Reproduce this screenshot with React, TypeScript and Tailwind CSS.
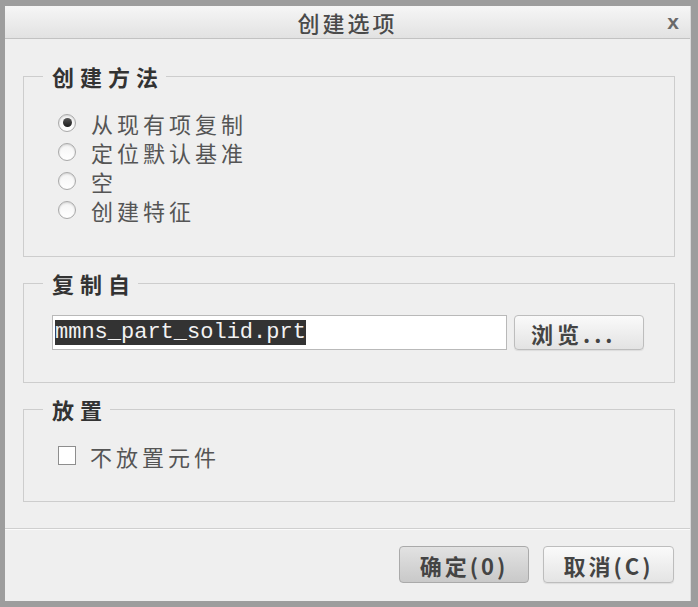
import React from "react";

const cjk = "font-['Noto_Sans_CJK_SC','Noto_Sans',sans-serif]";

const Radio = ({ checked }: { checked?: boolean }) => (
  <span className="w-[18px] h-[18px] rounded-full border border-[#a9a9a9] bg-gradient-to-b from-[#f4f4f4] to-white flex items-center justify-center shadow-[inset_0_1px_2px_rgba(0,0,0,0.15)]">
    {checked && (
      <span className="w-[9px] h-[9px] rounded-full bg-gradient-to-b from-[#555] to-[#1e1e1e]" />
    )}
  </span>
);

const Group = ({
  title,
  children,
  className,
}: {
  title: string;
  children: React.ReactNode;
  className?: string;
}) => (
  <fieldset
    className={`ml-[18px] mr-[15px] border border-[#cdcdcd] pl-[28px] pr-[28px] ${className ?? ""}`}
  >
    <legend className="ml-[-9px] pl-[9px] pr-[2px] text-[22px] leading-[30px] font-bold tracking-[6px] text-[#333]">
      {title}
    </legend>
    {children}
  </fieldset>
);

export default function App() {
  const methods = ["从现有项复制", "定位默认基准", "空", "创建特征"];

  return (
    <div
      className={`w-[698px] h-[607px] bg-[#9d9d9d] pt-[6px] pl-[5px] pr-[7px] pb-[6px] ${cjk}`}
    >
      <div className="h-full flex flex-col bg-[#efefef] border-r border-[#d8d8d8]">
        {/* title bar */}
        <div className="h-[33px] shrink-0 relative flex items-center justify-center bg-gradient-to-b from-[#f6f6f6] to-[#e2e2e2] border-b border-[#c2c2c2]">
          <span className="text-[22px] tracking-[3px] text-[#4a4a4a] font-medium leading-none">
            创建选项
          </span>
          <span className="absolute right-[11px] top-[5px] text-[21px] font-bold text-[#6a6a6a] leading-none font-['Liberation_Sans',sans-serif]">
            x
          </span>
        </div>

        {/* body */}
        <div className="flex flex-col pt-[22px]">
          <Group title="创建方法" className="pb-[32px]">
            <div className="mt-[17px] ml-[6px] flex flex-col">
              {methods.map((m, i) => (
                <div key={m} className="flex items-center h-[29px]">
                  <Radio checked={i === 0} />
                  <span className="ml-[15px] text-[22px] tracking-[4px] text-[#555] leading-none">
                    {m}
                  </span>
                </div>
              ))}
            </div>
          </Group>

          <Group title="复制自" className="mt-[11px] pb-[32px]">
            <div className="mt-[17px] flex items-center gap-[7px]">
              <div className="w-[455px] h-[35px] bg-white border border-[#b9b9b9] flex items-center px-[2px]">
                <span className="bg-[#333] text-[#f2f2f2] text-[22px] leading-[25px] h-[25px] font-['Liberation_Mono',monospace]">
                  mmns_part_solid.prt
                </span>
              </div>
              <button className="w-[130px] h-[35px] rounded-[4px] border border-[#bdbdbd] bg-gradient-to-b from-[#fafafa] to-[#e3e3e3] shadow-[0_1px_1px_rgba(0,0,0,0.08)] text-left pl-[16px] text-[22px] font-bold tracking-[4px] text-[#444] leading-none">
                浏览...
              </button>
            </div>
          </Group>

          <Group title="放置" className="mt-[11px] pb-[31px]">
            <div className="mt-[17px] ml-[6px] flex items-center h-[29px]">
              <span className="w-[18px] h-[19px] border border-[#8e8e8e] bg-white" />
              <span className="ml-[14px] text-[22px] tracking-[4px] text-[#555] leading-none">
                不放置元件
              </span>
            </div>
          </Group>
        </div>

        {/* footer */}
        <div className="mt-[26px] border-t border-[#cfcfcf] shadow-[inset_0_1px_0_#fbfbfb] flex justify-end gap-[14px] pr-[16px] pt-[17px]">
          <button className="w-[130px] h-[37px] rounded-[4px] border border-[#aaaaaa] bg-gradient-to-b from-[#e2e2e2] to-[#c9c9c9] text-[22px] font-bold tracking-[3px] text-[#444] leading-none">
            确定(0)
          </button>
          <button className="w-[131px] h-[37px] rounded-[4px] border border-[#bdbdbd] bg-gradient-to-b from-[#fafafa] to-[#e4e4e4] shadow-[0_1px_1px_rgba(0,0,0,0.08)] text-[22px] font-bold tracking-[3px] text-[#444] leading-none">
            取消(C)
          </button>
        </div>
      </div>
    </div>
  );
}
